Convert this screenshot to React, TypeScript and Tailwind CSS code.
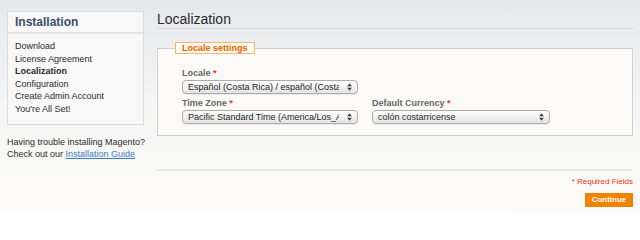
import React from "react";

const steps = [
  { label: "Download" },
  { label: "License Agreement" },
  { label: "Localization", active: true },
  { label: "Configuration" },
  { label: "Create Admin Account" },
  { label: "You're All Set!" },
];

const Arrows = () => (
  <svg width="5" height="8" viewBox="0 0 5 8" className="shrink-0">
    <path d="M2.5 0.3 L4.8 3.2 H0.2 Z" fill="#3a3a3a" />
    <path d="M2.5 7.7 L4.8 4.8 H0.2 Z" fill="#3a3a3a" />
  </svg>
);

const FakeSelect = ({ value, width }: { value: string; width: string }) => (
  <div
    className={`${width} h-[14px] flex items-center rounded-[4px] border border-[#ababab] bg-gradient-to-b from-[#ffffff] to-[#e4e4e4] shadow-[0_1px_0_rgba(0,0,0,0.06)] pl-[5px] pr-[5px]`}
  >
    <span className="flex-1 overflow-hidden whitespace-nowrap text-[9px] leading-[11px] text-[#1e1e1e]">
      {value}
    </span>
    <span className="w-[13px] flex justify-end">
      <Arrows />
    </span>
  </div>
);

const Label = ({ text }: { text: string }) => (
  <div className="text-[9px] leading-[10px] font-bold text-[#666] mb-[2px]">
    {text} <span className="text-[#eb340a]">*</span>
  </div>
);

export default function App() {
  return (
    <div className="w-[640px] h-[212px] overflow-hidden flex bg-gradient-to-b from-[#e5e8eb] via-[#f4f5f4] to-[#fcfbf7] font-['Liberation_Sans',Arial,sans-serif]">
      {/* Sidebar */}
      <div className="w-[157px] shrink-0 pl-[7px] pt-[11px]">
        <div className="w-[137px] border border-[#dcdcdc] bg-[#f8f8f8]">
          <div className="h-[22px] border-b-2 border-[#e2e2e2] pl-[7px] text-[12px] leading-[20px] font-bold text-[#3c4d68]">
            Installation
          </div>
          <ul className="pl-[7px] pt-[6px] pb-[8px] text-[9px] leading-[12.6px] text-[#2b2b2b]">
            {steps.map((s) => (
              <li key={s.label} className={s.active ? "font-bold" : ""}>
                {s.label}
              </li>
            ))}
          </ul>
        </div>
        <p className="mt-[11px] text-[9px] leading-[12px] text-[#2b2b2b]">
          Having trouble installing Magento?
          <br />
          Check out our{" "}
          <a className="text-[#3e7bc4] underline" href="#">
            Installation Guide
          </a>
        </p>
      </div>

      {/* Main content */}
      <div className="flex-1 pr-[7px] pt-[11px]">
        <h1 className="text-[14px] leading-[16px] pb-[1px] border-b border-[#d8dadc] text-[#2a2a2a]">
          Localization
        </h1>

        <fieldset className="mt-[13px] h-[94px] border border-[#cfcfcf] bg-[#fbfaf6]">
          <legend className="ml-[17px] h-[12px] px-[6px] border border-[#f5b865] bg-[#fffbf2] text-[9px] leading-[10px] font-bold text-[#eb5e00]">
            Locale settings
          </legend>
          <div className="pl-[24px] pt-[14px]">
            <Label text="Locale" />
            <FakeSelect value="Español (Costa Rica) / español (Costa Rica)" width="w-[176px]" />
            <div className="mt-[4px] flex gap-[14px]">
              <div>
                <Label text="Time Zone" />
                <FakeSelect value="Pacific Standard Time (America/Los_Angeles)" width="w-[176px]" />
              </div>
              <div>
                <Label text="Default Currency" />
                <FakeSelect value="colón costarricense" width="w-[178px]" />
              </div>
            </div>
          </div>
        </fieldset>

        <div className="mt-[33px] border-t-2 border-[#e9e9e7]" />
        <div className="mt-[6px] text-right text-[8px] leading-[10px] text-[#eb340a]">
          * Required Fields
        </div>
        <div className="mt-[6px] flex justify-end">
          <button className="h-[14px] w-[48px] bg-[#f18200] text-white text-[8px] leading-[14px] font-bold">
            Continue
          </button>
        </div>
      </div>
    </div>
  );
}
